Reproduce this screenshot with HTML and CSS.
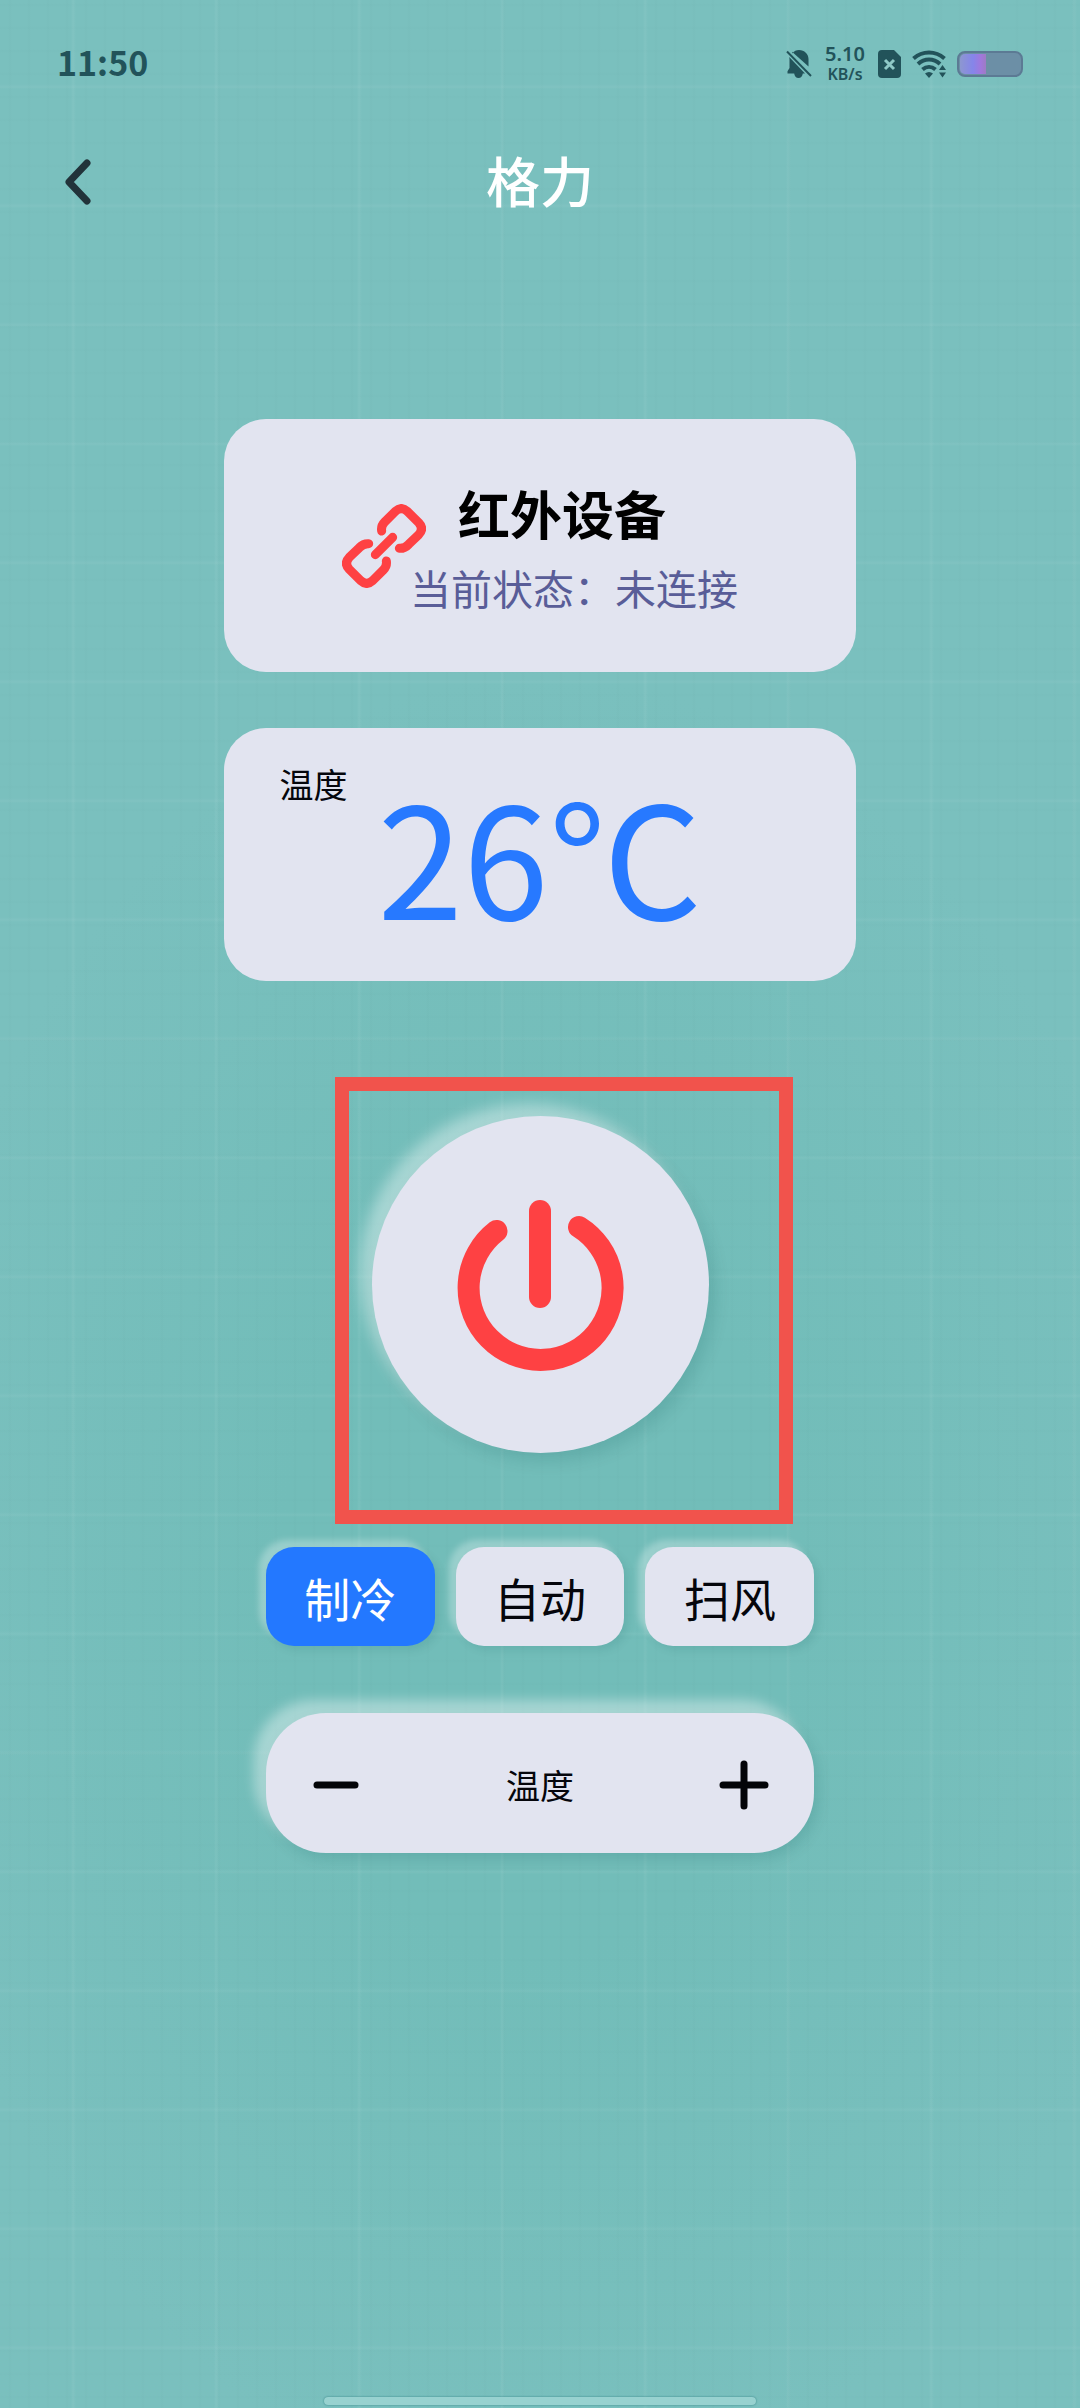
FILE: index.html
```html
<!DOCTYPE html>
<html lang="zh-CN">
<head>
<meta charset="utf-8">
<meta name="viewport" content="width=device-width, initial-scale=1">
<title>格力</title>
<link rel="stylesheet" href="styles.css">
</head>
<body>
<div class="screen">
  <div class="status">
    <span class="status-time">11:50</span>
    <div class="status-icons">
      <svg class="icon-bell" viewBox="0 0 26 28" aria-hidden="true">
        <path fill="currentColor" d="M6 3.500C8 1 10.500 0 13 0c5.500 0 9.500 4 9.500 9v7.500L6 1.800zM3.200 7 19 23.500h-2.200C16.500 26 15 28 12.500 28S8.500 26 8.200 23.500H1.500v-2.200l2-3.300V9z"/>
        <path fill="none" stroke="currentColor" stroke-width="2" d="M1 1.500 25 26"/>
      </svg>
      <span class="speed"><span class="speed-value">5.10</span><span class="speed-unit">KB/s</span></span>
      <svg class="icon-sim" viewBox="0 0 23 28" aria-hidden="true">
        <path fill="currentColor" d="M4 0h12l7 7v17a4 4 0 0 1-4 4H4a4 4 0 0 1-4-4V4a4 4 0 0 1 4-4z"/>
        <path class="sim-cross" d="m7 10 9 9m0-9-9 9"/>
      </svg>
      <svg class="icon-wifi" viewBox="0 0 34 28" aria-hidden="true">
        <g fill="none" stroke="currentColor" stroke-width="4">
          <path d="M1.500 8.500C10.500.5 23.500.5 32.500 8.500"/>
          <path d="M6 14C12.500 8 21.500 8 28 14"/>
          <path d="M10.500 19.500c4-3.500 9-3.500 13 0"/>
        </g>
        <path fill="currentColor" d="M13 23.500c2.500-2 5.500-2 8 0L17 28zM30.500 15l3.500 5h-7zM27 22.500h7l-3.500 5z"/>
      </svg>
      <span class="battery"><span class="battery-level"></span></span>
    </div>
  </div>

  <header class="nav">
    <button class="back" type="button" aria-label="返回">
      <svg viewBox="0 0 28 46" aria-hidden="true"><path d="M23 4 5 23l18 19"/></svg>
    </button>
    <h1 class="nav-title">格力</h1>
  </header>

  <main class="remote">
    <section class="card device">
      <svg class="icon-link" viewBox="62 69 252 252" aria-hidden="true">
        <path d="M181 150C179 138 182 131 190 123L222 91Q240 75 258 91L292 125Q309 143 292 161L262 190Q250 203 234 202"/>
        <path d="M195 240C197 252 194 259 186 267L154 299Q136 315 118 299L84 265Q67 247 84 229L114 200Q126 187 142 188"/>
        <path d="M162 221 214 169"/>
      </svg>
      <div class="device-text">
        <h2 class="device-name">红外设备</h2>
        <p class="device-state">当前状态：未连接</p>
      </div>
    </section>

    <section class="card reading">
      <h2 class="reading-label">温度</h2>
      <p class="reading-value">26℃</p>
    </section>

    <div class="power-area">
      <button class="power" type="button" aria-label="电源">
        <svg viewBox="0 0 168 174" aria-hidden="true">
          <path d="M40.500 33A72 72 0 1 0 123 29"/>
          <path d="M84 13v86"/>
        </svg>
      </button>
      <span class="highlight"></span>
    </div>

    <div class="modes">
      <button class="mode mode-active" type="button">制冷</button>
      <button class="mode" type="button">自动</button>
      <button class="mode" type="button">扫风</button>
    </div>

    <div class="stepper">
      <button class="step" type="button" aria-label="降低温度">
        <svg viewBox="0 0 50 50" aria-hidden="true"><path d="M6 25h38"/></svg>
      </button>
      <span class="step-label">温度</span>
      <button class="step" type="button" aria-label="升高温度">
        <svg viewBox="0 0 50 50" aria-hidden="true"><path d="M4 25h42M25 4v42"/></svg>
      </button>
    </div>
  </main>

  <div class="home-bar"></div>
</div>
</body>
</html>
```
FILE: styles.css
```css
* {
  box-sizing: border-box;
}

body {
  margin: 0;
  font-family: "Noto Sans CJK SC", "Noto Sans", sans-serif;
  color: #05060c;
}

h1, h2, p {
  margin: 0;
  font-weight: 400;
}

button {
  padding: 0;
  border: 0;
  font: inherit;
  color: inherit;
  background: none;
}

svg {
  display: block;
}

/* Woven cloth backdrop: fine threads over a slightly deeper centre */
.screen {
  display: flex;
  flex-direction: column;
  min-height: 100vh;
  background:
    repeating-linear-gradient(90deg, transparent 0 71px, #ffffff0e 73px, transparent 76px 143px),
    repeating-linear-gradient(0deg, transparent 0 58px, #ffffff0c 60px, transparent 63px 119px),
    repeating-linear-gradient(90deg, transparent 0 8px, #00404004 10px, transparent 12px 19px),
    repeating-linear-gradient(0deg, transparent 0 9px, #00404003 11px, transparent 13px 23px),
    radial-gradient(ellipse 60% 38% at 50% 66%, #72bdb9 0 40%, transparent),
    #7ac0be;
}

.status {
  display: flex;
  align-items: center;
  justify-content: space-between;
  height: 128px;
  padding: 0 57px;
  color: #22535a;
}

.status-time {
  padding-bottom: 4px;
  font-size: 34px;
  line-height: 50px;
  font-weight: 700;
}

.status-icons {
  display: flex;
  align-items: center;
}

.icon-bell {
  width: 26px;
  height: 28px;
}

.speed {
  display: flex;
  flex-direction: column;
  align-items: center;
  width: 40px;
  margin: 0 13px;
  font-family: "Noto Sans", sans-serif;
  font-weight: 600;
}

.speed-value {
  font-size: 20px;
  line-height: 20px;
}

.speed-unit {
  font-size: 16px;
  line-height: 20px;
}

.icon-sim {
  width: 23px;
  height: 28px;
}

.sim-cross {
  fill: none;
  stroke: #8fc9c7;
  stroke-width: 3;
}

.icon-wifi {
  width: 34px;
  height: 28px;
  margin: 0 11px;
}

.battery {
  width: 66px;
  height: 26px;
  padding: 1px;
  border: 2px solid #5c7a94;
  border-radius: 8px;
  background: #6c8fa6;
}

.battery-level {
  display: block;
  width: 26px;
  height: 100%;
  border-radius: 5px 0 0 5px;
  background: linear-gradient(90deg, #8d97d0, #8585ea 50%, #a078dc 80%, #9e7bc4);
}

.nav {
  display: grid;
  grid-template-columns: 108px 1fr 108px;
  align-items: center;
  height: 108px;
}

.back {
  width: 28px;
  height: 46px;
  margin-left: 64px;
}

.back path {
  fill: none;
  stroke: #22333a;
  stroke-width: 7;
  stroke-linecap: round;
  stroke-linejoin: round;
}

.nav-title {
  padding-bottom: 4px;
  text-align: center;
  font-size: 54px;
  line-height: 80px;
  font-weight: 500;
  color: #fff;
}

.remote {
  flex: 1;
  display: flex;
  flex-direction: column;
  align-items: center;
  padding-top: 183px;
}

.card {
  width: 58.6%;
  min-height: 253px;
  border-radius: 42px;
  background: #e2e4f0;
}

.device {
  display: flex;
  align-items: center;
  justify-content: center;
}

.icon-link {
  flex: none;
  width: 84px;
  height: 84px;
  margin-right: -16px;
  fill: none;
  stroke: #fe4143;
  stroke-width: 27;
  stroke-linecap: round;
  stroke-linejoin: round;
}

.device-text {
  padding-top: 8px;
}

.device-name {
  padding-left: 48px;
  font-size: 52px;
  line-height: 75px;
  font-weight: 700;
  color: #000;
}

.device-state {
  font-size: 41px;
  line-height: 75px;
  color: #595d98;
}

.reading {
  margin-top: 56px;
  padding-top: 39px;
}

.reading-label {
  padding-left: 56px;
  font-size: 34px;
  line-height: 34px;
}

.reading-value {
  text-align: center;
  font-size: 154px;
  line-height: 104px;
  color: #2779ff;
}

.power-area {
  position: relative;
  margin-top: 135px;
}

.power {
  display: grid;
  place-items: center;
  width: 337px;
  height: 337px;
  border-radius: 50%;
  background: #e2e4f0;
  box-shadow: -12px -12px 14px #ffffff60, 6px 8px 16px #00505024;
}

.power svg {
  width: 168px;
  height: 174px;
}

.power path {
  fill: none;
  stroke: #fe4143;
  stroke-width: 22;
  stroke-linecap: round;
}

/* Marker frame laid over the power button */
.highlight {
  position: absolute;
  inset: -39px -84px -71px -37px;
  border: 14px solid #f1534c;
  pointer-events: none;
}

.modes {
  display: grid;
  grid-template-columns: repeat(3, 1fr);
  gap: 21px;
  width: 50.8%;
  margin-top: 94px;
}

.mode {
  height: 99px;
  border-radius: 28px;
  font-size: 46px;
  line-height: 66px;
  background: #e2e4f0;
  box-shadow: -7px -7px 6px #ffffff48, 4px 4px 8px #0050501c;
}

.mode-active {
  color: #fff;
  background: #2378ff;
}

.stepper {
  display: flex;
  align-items: center;
  justify-content: space-between;
  width: 50.8%;
  height: 140px;
  margin-top: 67px;
  padding: 4px 45px 0;
  border-radius: 60px;
  background: #e2e4f0;
  box-shadow: -12px -13px 12px #ffffff60, 4px 6px 14px #00505024;
}

.step {
  width: 50px;
  height: 50px;
}

.step path {
  fill: none;
  stroke: #030408;
  stroke-width: 7;
  stroke-linecap: round;
}

.step-label {
  font-size: 34px;
  line-height: 50px;
}

.home-bar {
  align-self: center;
  width: 40%;
  height: 8px;
  margin-bottom: 3px;
  border-radius: 4px;
  background: #98d2d0;
  box-shadow: 0 0 2px #2f7f80;
}
```
